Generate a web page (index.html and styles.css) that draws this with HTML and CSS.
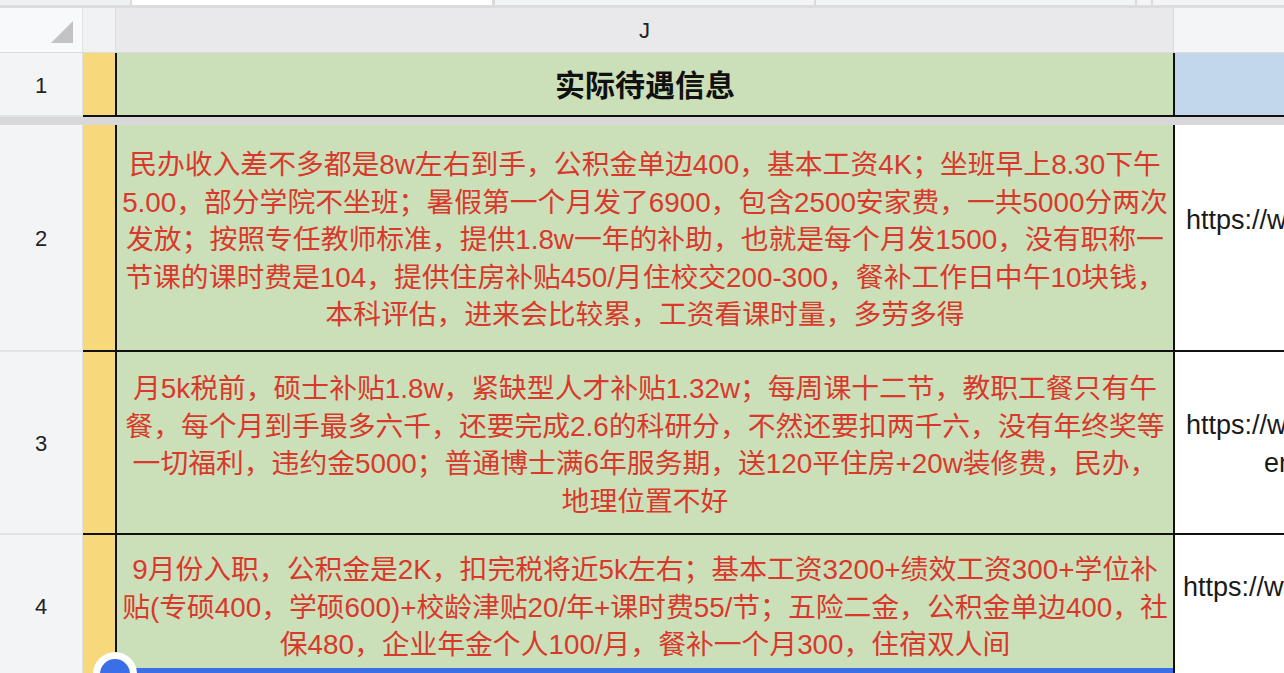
FILE: index.html
```html
<!DOCTYPE html>
<html lang="zh-CN">
<head>
<meta charset="utf-8">
<title>实际待遇信息</title>
<link rel="stylesheet" href="styles.css">
</head>
<body>
<div class="sheet">
  <div class="topbar">
    <div class="tb tb-a"></div>
    <div class="tb tb-white"></div>
    <div class="tb tb-b"></div>
    <div class="tb tb-c"></div>
    <div class="tb tb-d"></div>
    <div class="tb tb-e"></div>
  </div>
  <div class="colhead">
    <div class="corner">
      <svg class="corner-tri" width="24" height="24" viewBox="0 0 24 24"><polygon points="0,22 22,0 22,22" fill="#c3c3c5"/></svg>
    </div>
    <div class="ch ch-i"></div>
    <div class="ch ch-j">J</div>
    <div class="ch ch-k"></div>
  </div>

  <div class="row row-1">
    <div class="rh">1</div>
    <div class="ci"></div>
    <div class="cj title">实际待遇信息</div>
    <div class="ck ck-blue"></div>
  </div>

  <div class="freeze"></div>

  <div class="row row-2">
    <div class="rh">2</div>
    <div class="ci"></div>
    <div class="cj">
      <span class="ln">民办收入差不多都是8w左右到手，公积金单边400，基本工资4K；坐班早上8.30下午</span>
      <span class="ln">5.00，部分学院不坐班；暑假第一个月发了6900，包含2500安家费，一共5000分两次</span>
      <span class="ln">发放；按照专任教师标准，提供1.8w一年的补助，也就是每个月发1500，没有职称一</span>
      <span class="ln">节课的课时费是104，提供住房补贴450/月住校交200-300，餐补工作日中午10块钱，</span>
      <span class="ln">本科评估，进来会比较累，工资看课时量，多劳多得</span>
    </div>
    <div class="ck">
      <span class="url">https://www.xiaohongshu.com/explore/64f1a2</span>
      <span class="url url-far">b3000000001e03a</span>
    </div>
  </div>

  <div class="row row-3">
    <div class="rh">3</div>
    <div class="ci"></div>
    <div class="cj">
      <span class="ln">月5k税前，硕士补贴1.8w，紧缺型人才补贴1.32w；每周课十二节，教职工餐只有午</span>
      <span class="ln">餐，每个月到手最多六千，还要完成2.6的科研分，不然还要扣两千六，没有年终奖等</span>
      <span class="ln">一切福利，违约金5000；普通博士满6年服务期，送120平住房+20w装修费，民办，</span>
      <span class="ln">地理位置不好</span>
    </div>
    <div class="ck">
      <span class="url">https://www.xiaohongshu.com/discovery/it</span>
      <span class="url url-mid">em/6502c7d1000000001</span>
    </div>
  </div>

  <div class="row row-4">
    <div class="rh">4</div>
    <div class="ci"></div>
    <div class="cj">
      <span class="ln">9月份入职，公积金是2K，扣完税将近5k左右；基本工资3200+绩效工资300+学位补</span>
      <span class="ln">贴(专硕400，学硕600)+校龄津贴20/年+课时费55/节；五险二金，公积金单边400，社</span>
      <span class="ln">保480，企业年金个人100/月，餐补一个月300，住宿双人间</span>
    </div>
    <div class="ck ck-tight">
      <span class="url">https://www.xiaohongshu.com/explore/650a</span>
      <span class="url url-far">91e2000000001f</span>
    </div>
  </div>

  <div class="sel-bar"></div>
  <div class="sel-handle"><div class="sel-dot"></div></div>
</div>
</body>
</html>
```

FILE: styles.css
```css
html, body {
  margin: 0;
  padding: 0;
  background: #ffffff;
}

body {
  width: 1284px;
  height: 673px;
  overflow: hidden;
  font-family: "Liberation Sans", "Noto Sans CJK SC", sans-serif;
}

.sheet {
  position: relative;
  width: 1284px;
  height: 673px;
  overflow: hidden;
}

/* top toolbar remnant */
.topbar {
  display: flex;
  height: 5px;
  border-bottom: 3px solid #dcdcdf;
  background: #f1f2f4;
}
.tb { height: 5px; box-sizing: border-box; }
.tb-a { width: 132px; border-right: 2px solid #dadadc; background: #eff0f2; }
.tb-white { width: 363px; border-right: 3px solid #dadadc; background: #ffffff; }
.tb-b { width: 321px; border-right: 2px solid #dadadc; background: #f3f4f6; }
.tb-c { width: 321px; border-right: 2px solid #dadadc; background: #f3f4f6; }
.tb-d { width: 16px; border-right: 2px solid #dadadc; background: #f3f4f6; }
.tb-e { flex: 1; background: #f3f4f6; }

/* column header */
.colhead {
  display: flex;
  box-sizing: border-box;
  height: 45px;
  border-bottom: 1px solid #dcdcde;
}
.corner {
  width: 83px;
  flex: none;
  box-sizing: border-box;
  border-right: 1px solid #e0e1e3;
  background: #f8f9fa;
  display: flex;
  justify-content: flex-end;
  align-items: flex-end;
  padding: 0 7px 7px 0;
}
.corner-tri { display: block; }
.ch {
  flex: none;
  box-sizing: border-box;
  display: flex;
  align-items: center;
  justify-content: center;
  font-size: 22px;
  color: #222222;
}
.ch-i { width: 33px; background: #f1f2f4; border-right: 1px solid #dcdcde; }
.ch-j { width: 1058px; background: #e9e9eb; border-right: 1px solid #dcdcde; padding-top: 1px; }
.ch-k { flex: 1; background: #f4f5f7; }

/* rows */
.row {
  display: flex;
}
.row-1 { height: 64px; }
.row-2 { height: 227px; }
.row-3 { height: 183px; }
.row-4 { height: 142px; }

.rh {
  width: 83px;
  flex: none;
  box-sizing: border-box;
  border-right: 1px solid #e0e1e3;
  border-bottom: 2px solid #e2e3e5;
  background: #f3f4f6;
  display: flex;
  align-items: center;
  justify-content: center;
  font-size: 22px;
  color: #222222;
  padding-top: 3px;
}
.ci {
  width: 34px;
  flex: none;
  box-sizing: border-box;
  background: #f7d87b;
  border-right: 2px solid #111111;
  border-bottom: 2px solid #111111;
}
.cj {
  width: 1058px;
  flex: none;
  box-sizing: border-box;
  background: #cbe0b9;
  border-right: 2px solid #111111;
  border-bottom: 2px solid #111111;
  display: flex;
  flex-direction: column;
  align-items: center;
  justify-content: center;
  padding-top: 5px;
  color: #d9392b;
  font-size: 27.8px;
  line-height: 37.5px;
  font-family: "Liberation Sans", "Noto Sans CJK SC", sans-serif;
}
.ln {
  display: block;
  white-space: nowrap;
  text-align: center;
}
.title {
  color: #111111;
  font-weight: bold;
  font-size: 30px;
  line-height: 40px;
  padding-top: 4px;
}
.ck {
  flex: 1;
  min-width: 0;
  box-sizing: border-box;
  border-bottom: 2px solid #111111;
  background: #ffffff;
  overflow: hidden;
  display: flex;
  flex-direction: column;
  justify-content: center;
  padding-left: 11px;
  padding-top: 2px;
  font-size: 27px;
  line-height: 38px;
  color: #1a1a1a;
}
.ck-blue { background: #c3d7ec; }
.ck-tight { padding-left: 8px; }
.url { display: block; white-space: nowrap; }
.url-mid { padding-left: 78px; }
.url-far { padding-left: 200px; }

.freeze {
  height: 8px;
  background: #d8d8da;
}

/* selection overlay */
.sel-bar {
  position: absolute;
  left: 117px;
  top: 668px;
  width: 1056px;
  height: 6px;
  background: #3b6fe7;
}
.sel-handle {
  position: absolute;
  left: 93px;
  top: 652px;
  width: 44px;
  height: 44px;
  border-radius: 50%;
  background: #ffffff;
  display: flex;
  align-items: center;
  justify-content: center;
}
.sel-dot {
  width: 30px;
  height: 30px;
  border-radius: 50%;
  background: #3b6fe7;
}
```
